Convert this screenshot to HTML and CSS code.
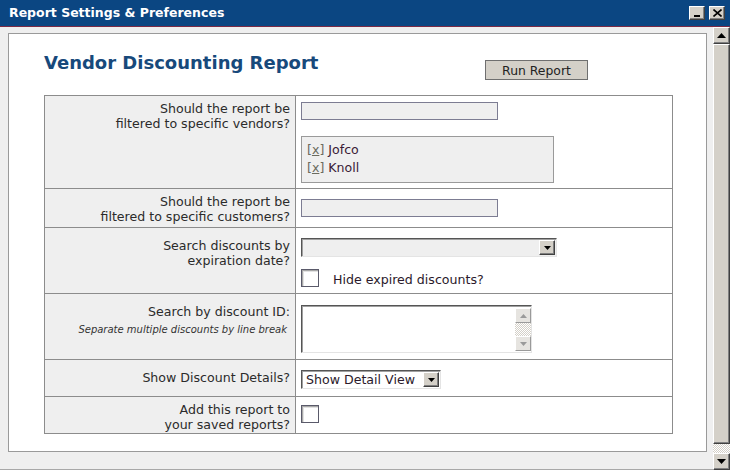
FILE: index.html
```html
<!DOCTYPE html>
<html>
<head>
<meta charset="utf-8">
<title>Report Settings &amp; Preferences</title>
<link rel="stylesheet" href="styles.css">
</head>
<body>
<div class="window">
  <div class="titlebar">
    <span class="title">Report Settings &amp; Preferences</span>
    <div class="win-buttons">
      <span class="win-btn"><span class="min-bar"></span></span>
      <span class="win-btn">
        <svg width="9" height="8" viewBox="0 0 9 8"><path d="M0.5 0.5 L8.5 7.5 M8.5 0.5 L0.5 7.5" stroke="#000" stroke-width="1.6"/></svg>
      </span>
    </div>
  </div>
  <div class="window-body">
    <div class="viewport">
      <div class="panel">
        <div class="header">
          <h1 class="heading">Vendor Discounting Report</h1>
          <button class="run-btn" type="button">Run Report</button>
        </div>
        <div class="form-grid">
          <div class="label">Should the report be<br>filtered to specific vendors?</div>
          <div class="field f-vendors">
            <div class="text-input"></div>
            <div class="chosen">
              <div class="chosen-item"><span class="rm">[<u>x</u>]</span> Jofco</div>
              <div class="chosen-item"><span class="rm">[<u>x</u>]</span> Knoll</div>
            </div>
          </div>

          <div class="label">Should the report be<br>filtered to specific customers?</div>
          <div class="field f-customers">
            <div class="text-input"></div>
          </div>

          <div class="label lower">Search discounts by<br>expiration date?</div>
          <div class="field f-expiry">
            <div class="select select-wide">
              <span class="select-text"></span>
              <span class="drop-btn"><svg width="7" height="4" viewBox="0 0 7 4"><polygon points="0,0 7,0 3.5,4" fill="#000"/></svg></span>
            </div>
            <div class="check-row">
              <span class="checkbox"></span>
              <span class="check-label">Hide expired discounts?</span>
            </div>
          </div>

          <div class="label lower">Search by discount ID:<div class="hint">Separate multiple discounts by line break</div></div>
          <div class="field f-ids">
            <div class="textarea">
              <div class="ta-scroll">
                <span class="ta-btn"><svg width="7" height="4" viewBox="0 0 7 4"><polygon points="0,4 7,4 3.5,0" fill="#9a9a9a"/></svg></span>
                <span class="ta-track"></span>
                <span class="ta-btn"><svg width="7" height="4" viewBox="0 0 7 4"><polygon points="0,0 7,0 3.5,4" fill="#9a9a9a"/></svg></span>
              </div>
            </div>
          </div>

          <div class="label lower">Show Discount Details?</div>
          <div class="field f-details">
            <div class="select select-small">
              <span class="select-text">Show Detail View</span>
              <span class="drop-btn"><svg width="7" height="4" viewBox="0 0 7 4"><polygon points="0,0 7,0 3.5,4" fill="#000"/></svg></span>
            </div>
          </div>

          <div class="label">Add this report to<br>your saved reports?</div>
          <div class="field f-save">
            <span class="checkbox"></span>
          </div>
        </div>
      </div>
    </div>
    <div class="scrollbar">
      <span class="sb-btn"><svg width="9" height="5" viewBox="0 0 9 5"><polygon points="0,5 9,5 4.5,0" fill="#000"/></svg></span>
      <span class="sb-thumb"></span>
      <span class="sb-track"></span>
      <span class="sb-btn"><svg width="9" height="5" viewBox="0 0 9 5"><polygon points="0,0 9,0 4.5,5" fill="#000"/></svg></span>
    </div>
  </div>
</div>
</body>
</html>
```

FILE: styles.css
```css
* { box-sizing: border-box; }
html, body { margin: 0; padding: 0; }
body {
  width: 730px;
  height: 470px;
  overflow: hidden;
  background: #efefef;
  font-family: "DejaVu Sans", Verdana, sans-serif;
  color: #2b2b2b;
}
.window { display: flex; flex-direction: column; height: 470px; }

/* title bar */
.titlebar {
  flex: none;
  height: 27px;
  background: #0b4682;
  border-bottom: 1px solid #7b2a45;
  display: flex;
  align-items: center;
  justify-content: space-between;
  padding: 0 5px 1px 9px;
}
.title { color: #fff; font-weight: bold; font-size: 12.5px; }
.win-buttons { display: flex; gap: 4px; }
.win-btn {
  width: 16px;
  height: 14px;
  background: #d4d0c8;
  border: 1px solid;
  border-color: #fff #404040 #404040 #fff;
  box-shadow: inset -1px -1px 0 #808080;
  display: flex;
  align-items: center;
  justify-content: center;
}
.min-bar { width: 6px; height: 2px; background: #000; margin-top: 6px; }

/* body */
.window-body { flex: 1; display: flex; min-height: 0; }
.viewport {
  flex: 1;
  padding: 6px 6px 17px 8px;
  border-bottom: 1px solid #a8a8a8;
}
.panel {
  height: 100%;
  background: #fff;
  border: 1px solid #9a9a9a;
  padding: 0 33px 0 35px;
}
.header { display: flex; align-items: flex-start; padding-top: 18px; height: 61px; }
.heading {
  margin: 0;
  font-size: 18px;
  line-height: 22px;
  font-weight: bold;
  color: #17497b;
}
.run-btn {
  margin: 8px 85px 0 auto;
  width: 103px;
  height: 20px;
  padding: 0;
  background: #d4d0c8;
  border: 1px solid #6f6f6f;
  font-family: inherit;
  font-size: 12.4px;
  color: #222;
}

/* form */
.form-grid {
  display: grid;
  grid-template-columns: 250px 1fr;
  gap: 1px;
  background: #8c8c8c;
  border: 1px solid #8c8c8c;
}
.label {
  background: #efefef;
  text-align: right;
  font-size: 12.6px;
  line-height: 15px;
  padding: 5px 5px 0 0;
  color: #2b2b2b;
}
.label.lower { padding-top: 10px; }
.hint { font-size: 10px; font-style: italic; line-height: 14px; margin: 4px 3px 0 0; color: #333; }
.field {
  background: #fff;
  display: flex;
  flex-direction: column;
  align-items: flex-start;
  padding-left: 5px;
}
.f-vendors { padding-top: 6px; padding-bottom: 5px; }
.f-customers { padding-top: 10px; padding-bottom: 10px; }
.f-expiry { padding-top: 10px; padding-bottom: 6px; }
.f-ids { padding-top: 11px; padding-bottom: 6px; }
.f-details { padding-top: 10px; padding-bottom: 7px; }
.f-save { padding-top: 8px; padding-bottom: 10px; }

.text-input {
  width: 197px;
  height: 18px;
  background: #efefef;
  border: 1px solid #7c7c92;
}
.chosen {
  margin-top: 16px;
  width: 253px;
  height: 47px;
  background: #efefef;
  border: 1px solid #9a9a9a;
  padding: 4px 5px;
}
.chosen-item { font-size: 12.6px; line-height: 18px; color: #3a1a36; }
.rm { color: #6b6b5e; }
.rm u { text-decoration-color: #6b6b5e; }

.select {
  height: 19px;
  display: flex;
  align-items: center;
  justify-content: space-between;
  border: 1px solid;
  border-color: #555 #e4e4e4 #e4e4e4 #555;
  box-shadow: inset 1px 1px 0 #a0a0a0;
  padding: 0 1px 0 4px;
  font-size: 12.6px;
  color: #2b1a2b;
}
.select-wide { width: 256px; background: #efefef; }
.select-small { width: 140px; background: #fff; }
.drop-btn {
  width: 16px;
  height: 15px;
  background: #d4d0c8;
  border: 1px solid;
  border-color: #fff #404040 #404040 #fff;
  box-shadow: inset -1px -1px 0 #808080;
  display: flex;
  align-items: center;
  justify-content: center;
}
.check-row { margin-top: 11px; display: flex; align-items: center; gap: 14px; height: 19px; }
.checkbox {
  width: 18px;
  height: 18px;
  border: 1px solid #5a5a6a;
  background: #fff;
  box-shadow: inset 1px 1px 0 #a8a8a8, inset 2px 2px 0 #e2e2e2;
}
.check-label { font-size: 12.6px; color: #2b1a2b; padding-top: 3px; }

.textarea {
  width: 231px;
  height: 48px;
  background: #fff;
  border: 1px solid;
  border-color: #555 #e4e4e4 #e4e4e4 #555;
  box-shadow: inset 1px 1px 0 #a0a0a0;
  display: flex;
  justify-content: flex-end;
  padding: 2px 0 1px 0;
}
.ta-scroll { width: 16px; display: flex; flex-direction: column; }
.ta-btn {
  height: 15px;
  background: #e6e4e0;
  border: 1px solid;
  border-color: #fff #9a9a9a #9a9a9a #fff;
  display: flex;
  align-items: center;
  justify-content: center;
}
.ta-track {
  flex: 1;
  background: repeating-conic-gradient(#d4d0c8 0 25%, #fff 0 50%) 0 0 / 2px 2px;
}

/* page scrollbar */
.scrollbar { width: 17px; flex: none; display: flex; flex-direction: column; }
.sb-btn {
  height: 17px;
  background: #d4d0c8;
  border: 1px solid;
  border-color: #fff #404040 #404040 #fff;
  box-shadow: inset -1px -1px 0 #808080;
  display: flex;
  align-items: center;
  justify-content: center;
}
.sb-thumb {
  flex: 1;
  background: #d4d0c8;
  border: 1px solid;
  border-color: #fff #404040 #404040 #fff;
  box-shadow: inset -1px -1px 0 #808080;
}
.sb-track {
  height: 9px;
  background: repeating-conic-gradient(#d4d0c8 0 25%, #fff 0 50%) 0 0 / 2px 2px;
}
```
